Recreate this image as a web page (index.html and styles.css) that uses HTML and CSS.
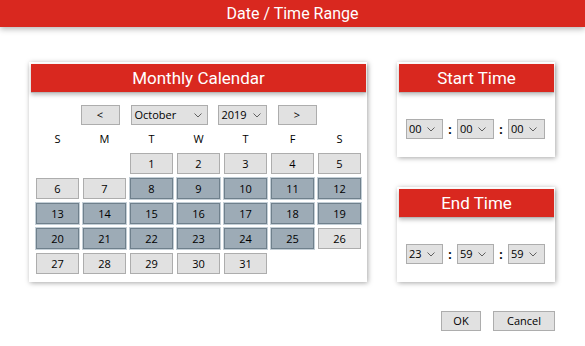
FILE: index.html
```html
<!DOCTYPE html>
<html lang="en">
<head>
  <meta charset="UTF-8">
  <title>Date / Time Range</title>
  <link rel="stylesheet" href="styles.css">
</head>
<body>
  <div class="topbar">Date / Time Range</div>

  <div class="main">
    <div class="panel calendar">
      <div class="panel-title">Monthly Calendar</div>
      <div class="nav-row">
        <div class="btn nav-btn">&lt;</div>
        <div class="dropdown month">October
          <svg class="chev" width="8" height="5" viewBox="0 0 8 5"><path d="M0.5 0.5 L4 4 L7.5 0.5" fill="none" stroke="#606060" stroke-width="1"/></svg>
        </div>
        <div class="dropdown year">2019
          <svg class="chev" width="8" height="5" viewBox="0 0 8 5"><path d="M0.5 0.5 L4 4 L7.5 0.5" fill="none" stroke="#606060" stroke-width="1"/></svg>
        </div>
        <div class="btn nav-btn">&gt;</div>
      </div>
      <div class="week-head">
        <span>S</span><span>M</span><span>T</span><span>W</span><span>T</span><span>F</span><span>S</span>
      </div>
      <div class="days" id="days"></div>
    </div>

    <div class="side">
      <div class="panel time">
        <div class="panel-title">Start Time</div>
        <div class="time-row">
          <div class="dropdown tsel">00<svg class="chev" width="8" height="5" viewBox="0 0 8 5"><path d="M0.5 0.5 L4 4 L7.5 0.5" fill="none" stroke="#606060" stroke-width="1"/></svg></div>
          <span class="colon">:</span>
          <div class="dropdown tsel">00<svg class="chev" width="8" height="5" viewBox="0 0 8 5"><path d="M0.5 0.5 L4 4 L7.5 0.5" fill="none" stroke="#606060" stroke-width="1"/></svg></div>
          <span class="colon">:</span>
          <div class="dropdown tsel">00<svg class="chev" width="8" height="5" viewBox="0 0 8 5"><path d="M0.5 0.5 L4 4 L7.5 0.5" fill="none" stroke="#606060" stroke-width="1"/></svg></div>
        </div>
      </div>
      <div class="panel time">
        <div class="panel-title">End Time</div>
        <div class="time-row">
          <div class="dropdown tsel">23<svg class="chev" width="8" height="5" viewBox="0 0 8 5"><path d="M0.5 0.5 L4 4 L7.5 0.5" fill="none" stroke="#606060" stroke-width="1"/></svg></div>
          <span class="colon">:</span>
          <div class="dropdown tsel">59<svg class="chev" width="8" height="5" viewBox="0 0 8 5"><path d="M0.5 0.5 L4 4 L7.5 0.5" fill="none" stroke="#606060" stroke-width="1"/></svg></div>
          <span class="colon">:</span>
          <div class="dropdown tsel">59<svg class="chev" width="8" height="5" viewBox="0 0 8 5"><path d="M0.5 0.5 L4 4 L7.5 0.5" fill="none" stroke="#606060" stroke-width="1"/></svg></div>
        </div>
      </div>
    </div>
  </div>

  <div class="footer">
    <div class="btn ok">OK</div>
    <div class="btn cancel">Cancel</div>
  </div>

  <script>
    // October 2019 starts on Tuesday, range 8..25 selected
    const days = document.getElementById('days');
    let html = '<div class="blank"></div><div class="blank"></div>';
    for (let d = 1; d <= 31; d++) {
      const cls = (d >= 8 && d <= 25) ? 'day sel' : 'day';
      html += `<div class="${cls}">${d}</div>`;
    }
    days.innerHTML = html;
  </script>
</body>
</html>
```

FILE: styles.css
```css
body {
  margin: 0;
  padding: 0;
  background-color: #fff;
  font-family: "Open Sans", "Noto Sans", sans-serif;
  font-size: 11px;
  color: #000;
  width: 585px;
  height: 346px;
  overflow: hidden;
}
.topbar {
  height: 27px;
  line-height: 27px;
  background-color: #d9281f;
  color: #fff;
  text-align: center;
  font-family: Roboto, sans-serif;
  font-size: 16px;
  box-shadow: 0 2px 6px rgba(0, 0, 0, 0.3);
}
.main {
  display: flex;
  align-items: flex-start;
  padding: 35px 0 0 29px;
  gap: 30px;
}
.panel {
  background-color: #fff;
  padding: 2px 1px 0 2px;
  box-shadow: 1px 1px 5px rgba(0, 0, 0, 0.35);
}
.panel-title {
  height: 28px;
  line-height: 28px;
  background-color: #d9281f;
  color: #fff;
  text-align: center;
  font-family: Roboto, sans-serif;
  font-size: 17px;
  box-shadow: 0 2px 4px rgba(0, 0, 0, 0.25);
  border-bottom: 1px solid #b7b7b7;
  position: relative;
}
.calendar {
  width: 335px;
  padding-bottom: 8px;
}
.nav-row {
  display: flex;
  justify-content: center;
  gap: 10px;
  margin-top: 12px;
}
.btn {
  box-sizing: border-box;
  height: 20px;
  line-height: 18px;
  background-color: #e1e1e1;
  border: 1px solid #adadad;
  text-align: center;
}
.nav-btn {
  width: 39px;
  margin: 0 1px;
}
.dropdown {
  box-sizing: border-box;
  height: 20px;
  line-height: 18px;
  background-color: #e1e1e1;
  border: 1px solid #adadad;
  padding-left: 3px;
  position: relative;
}
.chev {
  position: absolute;
  right: 5px;
  top: 7px;
}
.month { width: 77px; }
.year { width: 49px; }
.tsel {
  width: 37px;
  padding-left: 2px;
}
.tsel .chev { right: 7px; }
.week-head {
  display: grid;
  grid-template-columns: repeat(7, 43px);
  column-gap: 4px;
  margin: 4px 0 0 5px;
  height: 20px;
  line-height: 20px;
  text-align: center;
}
.days {
  display: grid;
  grid-template-columns: repeat(7, 43px);
  grid-auto-rows: 21px;
  gap: 4px;
  margin: 4px 0 0 5px;
}
.day {
  box-sizing: border-box;
  background-color: #e1e1e1;
  border: 1px solid #adadad;
  text-align: center;
  line-height: 19px;
}
.day.sel {
  background-color: #9dabb6;
  border: 1px solid #6f808c;
  box-shadow: 0 0 0 1px #c4cfd7;
}
.side {
  display: flex;
  flex-direction: column;
  gap: 30px;
}
.time {
  width: 155px;
  height: 93px;
}
.time-row {
  display: flex;
  justify-content: center;
  align-items: center;
  margin-top: 26px;
  padding-right: 2px;
}
.colon {
  width: 14px;
  text-align: center;
  font-weight: bold;
  font-size: 12px;
}
.footer {
  display: flex;
  justify-content: flex-end;
  gap: 12px;
  padding: 29px 30px 0 0;
}
.ok { width: 40px; }
.cancel { width: 62px; }
```
